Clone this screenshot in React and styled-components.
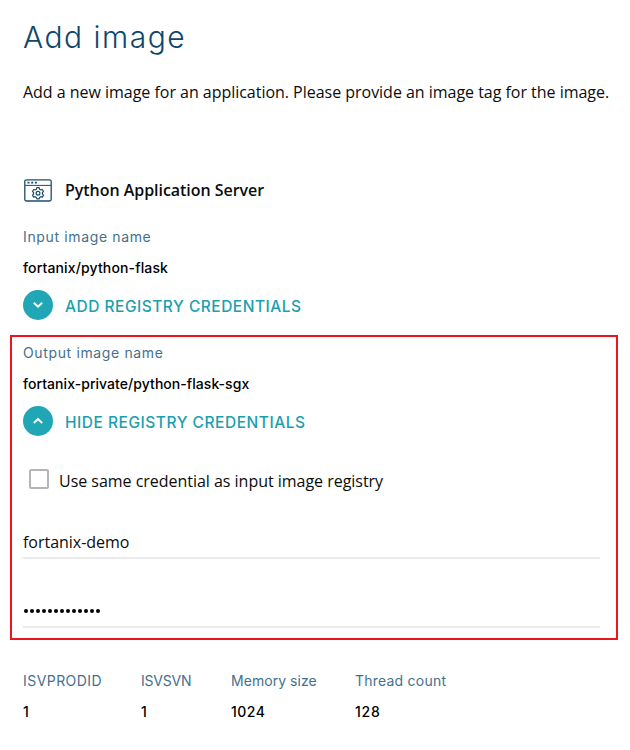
import React from 'react';
import styled, { createGlobalStyle } from 'styled-components';

const GlobalStyle = createGlobalStyle`
  * { box-sizing: border-box; }
  body { margin: 0; background: #fff; color: #0c0c0c; }
`;

const Page = styled.main`
  width: 630px;
  height: 750px;
  padding: 17px 0 0;
  display: flex;
  flex-direction: column;
  background: #fff;
  font-family: 'Open Sans', sans-serif;
  font-size: 16px;
  line-height: 24px;
  letter-spacing: -0.025px;
  white-space: nowrap;
`;

const Section = styled.section`
  padding-left: 23px;
`;

const Title = styled.h1`
  margin: 0;
  font: 300 30px/40px Inter, sans-serif;
  letter-spacing: 1.5px;
  color: #10466a;
`;

const Description = styled.p`
  margin: 23px 0 0;
`;

const AppHeading = styled.div`
  display: flex;
  align-items: center;
  gap: 13px;
  height: 24px;
  margin-top: 74px;
  padding-left: 1px;
`;

const AppName = styled.h2`
  margin: 0;
  font: 600 16px/24px 'Open Sans', sans-serif;
  letter-spacing: -0.04px;
`;

const Label = styled.div`
  font: 400 14px/20px Inter, sans-serif;
  letter-spacing: ${(p) => p.$track || 0}px;
  color: #45708d;
`;

const Value = styled.div`
  margin-top: 11px;
  font: 500 14px/20px Inter, sans-serif;
  letter-spacing: ${(p) => p.$track || 0}px;
  color: #000;
`;

const InputImage = styled.div`
  margin-top: 25px;
`;

const Toggle = styled.button`
  display: flex;
  align-items: center;
  gap: 12px;
  height: 30px;
  margin: 12px 0 0;
  padding: 0;
  border: 0;
  background: none;
  color: #1b9fae;
`;

const ToggleDisc = styled.span`
  display: grid;
  place-items: center;
  width: 30px;
  height: 30px;
  border-radius: 50%;
  background: #20a6b5;
`;

const ToggleText = styled.span`
  padding-top: 4px;
  font: 500 15.5px/24px Inter, sans-serif;
  letter-spacing: ${(p) => p.$track || 0}px;
`;

const OutputPanel = styled.section`
  width: 608px;
  height: 305px;
  margin: 15px 0 0 10px;
  padding: 6px 16px 0 11px;
  border: 2px solid #ee141c;
`;

const CheckRow = styled.label`
  display: flex;
  gap: 10px;
  height: 24px;
  margin: 33px 0 0 6px;
`;

const CheckBox = styled.span`
  width: 20px;
  height: 20px;
  border: 2px solid #b5b5b5;
  border-radius: 2px;
`;

const Field = styled.div`
  height: 29px;
  margin-top: ${(p) => p.$gap}px;
  border-bottom: 2px solid #ebebeb;
`;

const Dots = styled.div`
  display: flex;
  gap: 2px;
  padding: 10px 0 0 1px;
`;

const Dot = styled.i`
  width: 4px;
  height: 4px;
  border-radius: 50%;
  background: #000;
`;

const Stats = styled.section`
  display: grid;
  grid-template-columns: 118px 90px 124px 120px;
  margin-top: 31px;
  padding-left: 23px;
`;

const AppIcon = () => (
  <svg width="28" height="23" viewBox="0 0 28 23" fill="none" stroke="#1d4d6c">
    <rect x="0.8" y="0.8" width="26.4" height="21.2" rx="1.8" strokeWidth="1.3" />
    <path d="M1 6.4h26" strokeWidth="1" />
    <path d="M3.5 3.6h2M7.2 3.6h2M10.9 3.6h2" strokeWidth="1.7" />
    <path
      d="M12.8 8.7h2.4l.4 1.5 1.2.7 1.5-.4 1.2 2-1.1 1.1v1.4l1.1 1.1-1.2 2-1.5-.4-1.2.7-.4 1.5h-2.4l-.4-1.5-1.2-.7-1.5.4-1.2-2 1.1-1.1v-1.4l-1.1-1.1 1.2-2 1.5.4 1.2-.7z"
      strokeWidth="1.2"
      strokeLinejoin="round"
    />
    <circle cx="14" cy="14.3" r="1.9" strokeWidth="1.2" />
  </svg>
);

const Chevron = ({ up }) => (
  <svg width="12" height="12" viewBox="0 0 12 12" fill="none" stroke="#fff" strokeWidth="1.9">
    <path d={up ? 'M1.8 8 6 4l4.2 4' : 'M1.8 3.8 6 7.8l4.2-4'} />
  </svg>
);

const CredentialToggle = ({ open, track, children }) => (
  <Toggle type="button">
    <ToggleDisc><Chevron up={open} /></ToggleDisc>
    <ToggleText $track={track}>{children}</ToggleText>
  </Toggle>
);

const stats = [
  { label: 'ISVPRODID', value: '1', track: 0.45 },
  { label: 'ISVSVN', value: '1', track: -0.2 },
  { label: 'Memory size', value: '1024', track: 0.05 },
  { label: 'Thread count', value: '128', track: 0.22 },
];

export default function App() {
  return (
    <Page>
      <GlobalStyle />
      <Section>
        <Title>Add image</Title>
        <Description>
          Add a new image for an application. Please provide an image tag for the image.
        </Description>
        <AppHeading>
          <AppIcon />
          <AppName>Python Application Server</AppName>
        </AppHeading>
        <InputImage>
          <Label $track={0.64}>Input image name</Label>
          <Value $track={0.14}>fortanix/python-flask</Value>
          <CredentialToggle track={0.5}>ADD REGISTRY CREDENTIALS</CredentialToggle>
        </InputImage>
      </Section>
      <OutputPanel>
        <Label $track={0.64}>Output image name</Label>
        <Value $track={0.05}>fortanix-private/python-flask-sgx</Value>
        <CredentialToggle open track={0.52}>HIDE REGISTRY CREDENTIALS</CredentialToggle>
        <CheckRow>
          <CheckBox />
          Use same credential as input image registry
        </CheckRow>
        <Field $gap={37}>fortanix-demo</Field>
        <Field $gap={40}>
          <Dots>{Array.from({ length: 13 }, (_, i) => <Dot key={i} />)}</Dots>
        </Field>
      </OutputPanel>
      <Stats>
        {stats.map((s) => (
          <div key={s.label}>
            <Label $track={s.track}>{s.label}</Label>
            <Value $track={s.value === '128' ? 0.8 : 0.5}>{s.value}</Value>
          </div>
        ))}
      </Stats>
    </Page>
  );
}
